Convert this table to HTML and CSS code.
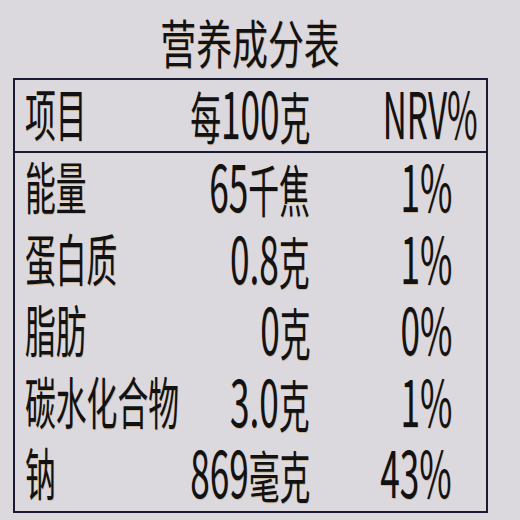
FILE: index.html
```html
<!DOCTYPE html>
<html lang="zh-CN">
<head>
<meta charset="utf-8">
<title>营养成分表</title>
<link rel="stylesheet" href="styles.css">
</head>
<body>
<div class="page">
  <h1 class="title"><span class="sx">营养成分表</span></h1>
  <div class="table">
    <div class="row head">
      <div class="c name"><span class="sx">项目</span></div>
      <div class="c val"><span class="sx">每<span class="n">100</span>克</span></div>
      <div class="c nrv nrv-head"><span class="sx"><span class="n">NRV%</span></span></div>
    </div>
    <div class="row">
      <div class="c name"><span class="sx">能量</span></div>
      <div class="c val"><span class="sx"><span class="n">65</span>千焦</span></div>
      <div class="c nrv"><span class="sx"><span class="n">1%</span></span></div>
    </div>
    <div class="row">
      <div class="c name"><span class="sx">蛋白质</span></div>
      <div class="c val"><span class="sx"><span class="n">0.8</span>克</span></div>
      <div class="c nrv"><span class="sx"><span class="n">1%</span></span></div>
    </div>
    <div class="row">
      <div class="c name"><span class="sx">脂肪</span></div>
      <div class="c val"><span class="sx"><span class="n">0</span>克</span></div>
      <div class="c nrv"><span class="sx"><span class="n">0%</span></span></div>
    </div>
    <div class="row">
      <div class="c name"><span class="sx">碳水化合物</span></div>
      <div class="c val"><span class="sx"><span class="n">3.0</span>克</span></div>
      <div class="c nrv"><span class="sx"><span class="n">1%</span></span></div>
    </div>
    <div class="row">
      <div class="c name"><span class="sx">钠</span></div>
      <div class="c val"><span class="sx"><span class="n">869</span>毫克</span></div>
      <div class="c nrv"><span class="sx"><span class="n">43%</span></span></div>
    </div>
  </div>
</div>
</body>
</html>
```

FILE: styles.css
```css
*, *::before, *::after {
  box-sizing: border-box;
}
html, body {
  margin: 0;
  padding: 0;
}
body {
  background: #dbd8de;
  font-family: "Noto Sans CJK SC", "Noto Sans", sans-serif;
  color: #121212;
}
.page {
  width: 520px;
  height: 520px;
  padding: 0 32px 0 13px;
  overflow: hidden;
}
.title {
  margin: 0;
  height: 78px;
  padding-top: 6px;
  display: flex;
  justify-content: center;
  align-items: center;
  font-size: 52px;
  font-weight: 400;
  line-height: 1;
  white-space: nowrap;
  text-shadow: 1px 1px 0 rgba(170, 120, 30, 0.35);
}
.title .sx {
  transform: scaleX(0.69);
  transform-origin: center center;
}
.table {
  border: 2px solid #1a1a34;
}
.row {
  display: grid;
  grid-template-columns: 140px 145px 142px;
  padding: 0 34px 12px 10px;
  height: 71.6px;
  align-items: center;
}
.head {
  height: 73px;
  border-bottom: 2px solid #1a1a34;
}
.c {
  display: flex;
  font-size: 56px;
  line-height: 1;
  white-space: nowrap;
  text-shadow: 1px 1px 0 rgba(170, 120, 30, 0.35);
}
.name {
  justify-content: flex-start;
}
.val, .nrv {
  justify-content: flex-end;
}
.nrv-head {
  margin-right: -26px;
}
.sx {
  display: inline-block;
  flex-shrink: 0;
  transform: scaleX(0.55);
  transform-origin: right center;
}
.name .sx {
  transform-origin: left center;
}
.nrv-head .sx {
  transform: scaleX(0.52);
}
.n {
  font-size: 1.14em;
}
```
